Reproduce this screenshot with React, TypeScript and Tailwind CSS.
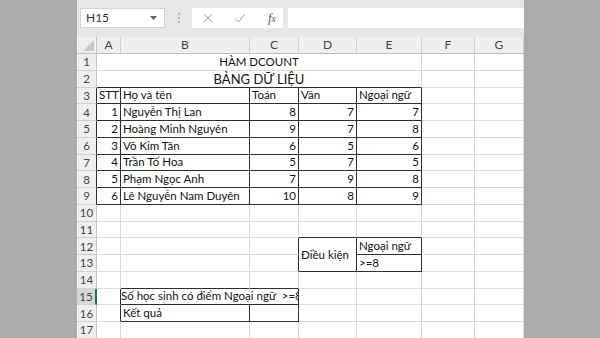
import React from "react";

type Cell = {
  c: number;
  cs?: number;
  rs?: number;
  t?: string;
  a?: "l" | "r" | "c";
  big?: boolean;
  clip?: boolean;
};

const COLS = ["A", "B", "C", "D", "E", "F", "G"];

const scores: [number, string, number, number, number][] = [
  [1, "Nguyễn Thị Lan", 8, 7, 7],
  [2, "Hoàng Minh Nguyên", 9, 7, 8],
  [3, "Võ Kim Tân", 6, 5, 6],
  [4, "Trần Tố Hoa", 5, 7, 5],
  [5, "Phạm Ngọc Anh", 7, 9, 8],
  [6, "Lê Nguyễn Nam Duyên", 10, 8, 9],
];

const specials: Record<number, Cell[]> = {
  1: [{ c: 1, cs: 5, t: "HÀM DCOUNT", a: "c" }],
  2: [{ c: 1, cs: 5, t: "BẢNG DỮ LIỆU", a: "c", big: true }],
  3: [
    { c: 1, t: "STT" },
    { c: 2, t: "Họ và tên" },
    { c: 3, t: "Toán" },
    { c: 4, t: "Văn" },
    { c: 5, t: "Ngoại ngữ" },
  ],
  12: [
    { c: 4, rs: 2, t: "Điều kiện" },
    { c: 5, t: "Ngoại ngữ" },
  ],
  13: [{ c: 5, t: ">=8" }],
  15: [{ c: 2, cs: 2, t: "Số học sinh có điểm Ngoại ngữ  >=8", clip: true }],
  16: [{ c: 2, t: "Kết quả" }],
};

scores.forEach(([n, name, a, b, e], i) => {
  specials[4 + i] = [
    { c: 1, t: String(n), a: "r" },
    { c: 2, t: name },
    { c: 3, t: String(a), a: "r" },
    { c: 4, t: String(b), a: "r" },
    { c: 5, t: String(e), a: "r" },
  ];
});

// cells that carry the thin black table borders
function boxed(r: number, c: number) {
  if (r >= 3 && r <= 9 && c >= 1 && c <= 5) return true;
  if (r >= 12 && r <= 13 && c >= 4 && c <= 5) return true;
  if (r >= 15 && r <= 16 && c >= 2 && c <= 3) return true;
  return false;
}

const spanCls: Record<number, string> = { 1: "", 2: "col-span-2", 5: "col-span-5" };

function GridCell({ r, cell }: { r: number; cell: Cell }) {
  const cs = cell.cs ?? 1;
  const rs = cell.rs ?? 1;
  const last = cell.c + cs - 1;
  let darkR = false;
  let darkB = false;
  for (let i = 0; i < rs; i++) {
    if (boxed(r + i, last) || boxed(r + i, last + 1)) darkR = true;
  }
  for (let j = cell.c; j <= last; j++) {
    if (boxed(r + rs - 1, j) || boxed(r + rs, j)) darkB = true;
  }
  const align =
    cell.a === "r" ? "justify-end pr-[2px]" : cell.a === "c" ? "justify-center" : "justify-start pl-[2px]";
  return (
    <div
      className={[
        "flex border-r border-b text-[11.5px] text-[#111]",
        rs === 2 ? "items-center" : "items-end pb-[1px]",
        darkR ? "border-r-[#2e2e2e]" : "border-r-[#dadada]",
        darkB ? "border-b-[#2e2e2e]" : "border-b-[#dadada]",
        spanCls[cs],
        rs === 2 ? "row-span-2" : "",
        cell.clip ? "overflow-hidden pl-0" : align,
        cell.big ? "text-[13px]" : "",
      ].join(" ")}
    >
      {cell.t && <span className="whitespace-pre leading-[14px]">{cell.t}</span>}
    </div>
  );
}

function Toolbar() {
  return (
    <div className="flex h-[37px] items-start bg-[#e6e6e6] pt-[8px]">
      <div className="ml-[3px] flex h-[20px] w-[85px] items-center justify-between border border-[#d2d2d2] bg-white pl-[5px] pr-[7px]">
        <span className="text-[12px] text-[#333]">H15</span>
        <svg width="7" height="4" viewBox="0 0 7 4">
          <path d="M0 0h7L3.5 4z" fill="#666" />
        </svg>
      </div>
      <div className="flex h-[20px] w-[27px] flex-col items-center justify-center gap-[2px]">
        <div className="h-[2px] w-[2px] rounded-full bg-[#a8a8a8]" />
        <div className="h-[2px] w-[2px] rounded-full bg-[#a8a8a8]" />
        <div className="h-[2px] w-[2px] rounded-full bg-[#a8a8a8]" />
      </div>
      <div className="flex h-[20px] w-[91px] items-center justify-between bg-white pl-[11px] pr-[7px]">
        <svg width="10" height="10" viewBox="0 0 10 10">
          <path d="M1 1l8 8M9 1L1 9" stroke="#a0a0a0" strokeWidth="1" fill="none" />
        </svg>
        <svg width="12" height="10" viewBox="0 0 12 10">
          <path d="M1 5.5l3.5 3.5L11 1" stroke="#a0a0a0" strokeWidth="1" fill="none" />
        </svg>
        <span className="font-['Liberation_Serif',serif] text-[13px] italic text-[#555]">
          f<span className="text-[10px]">x</span>
        </span>
      </div>
      <div className="ml-[5px] h-[20px] flex-1 bg-white" />
    </div>
  );
}

export default function App() {
  const rows: React.ReactNode[] = [];
  const taken = new Set<string>();

  for (let r = 1; r <= 17; r++) {
    const sel = r === 15;
    rows.push(
      <div
        key={`h${r}`}
        className={[
          "flex items-center justify-center border-b border-b-[#d0d0d0] text-[11.5px] text-[#444]",
          sel ? "border-r-2 border-r-[#217346] bg-[#d6d6d6]" : "border-r",
          !sel && boxed(r, 1) ? "border-r-[#2e2e2e] bg-[#efefef]" : "",
          !sel && !boxed(r, 1) ? "border-r-[#c4c4c4] bg-[#efefef]" : "",
        ].join(" ")}
      >
        {r}
      </div>
    );
    const sp = specials[r] ?? [];
    for (let c = 1; c <= 7; c++) {
      if (taken.has(`${r}-${c}`)) continue;
      const cell = sp.find((s) => s.c === c) ?? { c };
      const cs = cell.cs ?? 1;
      const rs = cell.rs ?? 1;
      for (let i = 0; i < rs; i++) for (let j = 0; j < cs; j++) taken.add(`${r + i}-${c + j}`);
      rows.push(<GridCell key={`${r}-${c}`} r={r} cell={cell} />);
    }
  }

  return (
    <div className="flex h-[338px] w-[600px] overflow-hidden bg-[#ababab] font-['Lato','Open_Sans',sans-serif]">
      <div className="w-[77px] shrink-0" />
      <div className="w-[447px] shrink-0 bg-white">
        <Toolbar />
        <div className="grid grid-cols-[20px_24px_129px_49px_58px_65px_53px_49px] grid-rows-[17px_repeat(17,16.75px)]">
          <div className="flex items-end justify-end border-r border-b border-r-[#c4c4c4] border-b-[#bdbdbd] bg-[#efefef] p-[2px]">
            <svg width="11" height="11" viewBox="0 0 11 11">
              <path d="M11 0v11H0z" fill="#c9c9c9" />
            </svg>
          </div>
          {COLS.map((l) => (
            <div
              key={l}
              className="flex items-center justify-center border-r border-b border-r-[#d0d0d0] border-b-[#bdbdbd] bg-[#efefef] text-[12px] text-[#444]"
            >
              {l}
            </div>
          ))}
          {rows}
        </div>
      </div>
      <div className="flex-1" />
    </div>
  );
}
